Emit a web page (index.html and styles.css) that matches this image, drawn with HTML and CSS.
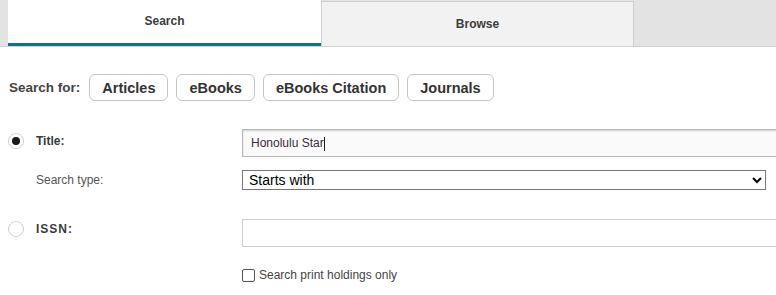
FILE: index.html
```html
<!DOCTYPE html>
<html>
<head>
<meta charset="utf-8">
<link rel="stylesheet" href="styles.css">
</head>
<body>
<div class="tabs">
  <div class="tab tab-active">Search</div>
  <div class="tab tab-inactive">Browse</div>
</div>
<div class="content">
  <div class="searchfor">
    <span class="sf-label">Search for:</span>
    <button class="pill">Articles</button>
    <button class="pill">eBooks</button>
    <button class="pill">eBooks Citation</button>
    <button class="pill">Journals</button>
  </div>
  <div class="form">
    <div class="lab"><span class="radio checked"></span><span class="lbl-bold">Title:</span></div>
    <div class="field"><input class="txt txt-filled" type="text" value="Honolulu Star"><span class="caret"></span></div>
    <div class="lab sub"><span class="lbl-normal">Search type:</span></div>
    <div class="field"><select class="sel"><option>Starts with</option></select></div>
    <div class="lab issn"><span class="radio"></span><span class="lbl-bold spaced">ISSN:</span></div>
    <div class="field issn-field"><input class="txt txt-empty" type="text"></div>
    <div class="lab"></div>
    <div class="field chk-field"><span class="checkbox"></span><span class="chk-label">Search print holdings only</span></div>
  </div>
</div>
</body>
</html>
```
FILE: styles.css
```css
* { box-sizing: border-box; }
body {
  margin: 0;
  font-family: "Liberation Sans", Arial, sans-serif;
  background: #fff;
  overflow: hidden;
  width: 776px;
}
.tabs {
  display: flex;
  background: #e3e3e3;
  padding-left: 8px;
  height: 47px;
  border-bottom: 1px solid #d2d2d2;
}
.tab {
  width: 313px;
  display: flex;
  align-items: center;
  justify-content: center;
  font-size: 12px;
  font-weight: bold;
  color: #3c3c3c;
}
.tab-active {
  background: #fff;
  height: 46px;
  border-bottom: 3px solid #13708f;
  padding-bottom: 1px;
}
.tab-inactive {
  background: #f2f2f2;
  margin-top: 1px;
  height: 45px;
  border: 1px solid #cfcfcf;
  border-bottom: none;
}
.content {
  padding-left: 8px;
}
.searchfor {
  display: flex;
  align-items: center;
  margin-top: 27px;
  height: 27px;
}
.sf-label {
  font-size: 13.5px;
  font-weight: bold;
  color: #444;
  margin-left: 1px;
  margin-right: 9px;
}
.pill {
  font-family: "Liberation Sans", Arial, sans-serif;
  font-size: 14.5px;
  font-weight: bold;
  color: #333;
  background: #fff;
  border: 1px solid #c4c4c4;
  border-radius: 6px;
  height: 27px;
  padding: 0 12px;
  margin-right: 8px;
}
.form {
  display: grid;
  grid-template-columns: 234px 1fr;
  margin-top: 27px;
}
.lab {
  display: flex;
  align-items: center;
  height: 25px;
}
.radio {
  width: 16px;
  height: 16px;
  border-radius: 50%;
  border: 1px solid #d0d0d0;
  background: #fff;
  display: flex;
  align-items: center;
  justify-content: center;
  margin-right: 12px;
}
.radio.checked::after {
  content: "";
  width: 8px;
  height: 8px;
  border-radius: 50%;
  background: #1a1a1a;
}
.lbl-bold {
  font-size: 12px;
  font-weight: bold;
  color: #3a3a3a;
}
.spaced { letter-spacing: 1px; }
.lbl-normal {
  font-size: 12px;
  color: #555;
  margin-left: 28px;
}
.sub {
  margin-top: 13px;
  height: 20px;
}
.field {
  position: relative;
  margin-right: -30px;
}
.txt {
  display: block;
  width: 100%;
  height: 28px;
  margin-top: 1px;
  padding: 0 8px;
  font-family: "Liberation Sans", Arial, sans-serif;
  font-size: 12px;
  color: #3b2b3a;
  outline: none;
}
.txt-filled {
  background: #fafafa;
  border: 1px solid #b8b8b8;
  box-shadow: inset 0 1px 2px rgba(0,0,0,0.18);
}
.caret {
  position: absolute;
  left: 82px;
  top: 9px;
  width: 1px;
  height: 14px;
  background: #222;
}
.txt-empty {
  background: #fff;
  border: 1px solid #cfcfcf;
}
.field .sel {
  margin-top: 13px;
  width: 524px;
  height: 20px;
  font-family: "Liberation Sans", Arial, sans-serif;
  font-size: 14px;
  color: #000;
  border: 1px solid #767676;
  border-radius: 0;
  background: #fff;
  padding: 0 2px;
}
.issn {
  margin-top: 29px;
  height: 20px;
  align-items: center;
}
.issn-field { margin-top: 29px; }
.issn-field .txt { margin-top: 0; }
.chk-field {
  display: flex;
  align-items: center;
  margin-top: 21px;
}
.checkbox {
  width: 13px;
  height: 13px;
  border: 1px solid #555;
  border-radius: 2px;
  background: #fff;
  margin-right: 4px;
}
.chk-label {
  font-size: 12px;
  color: #444;
}
```
